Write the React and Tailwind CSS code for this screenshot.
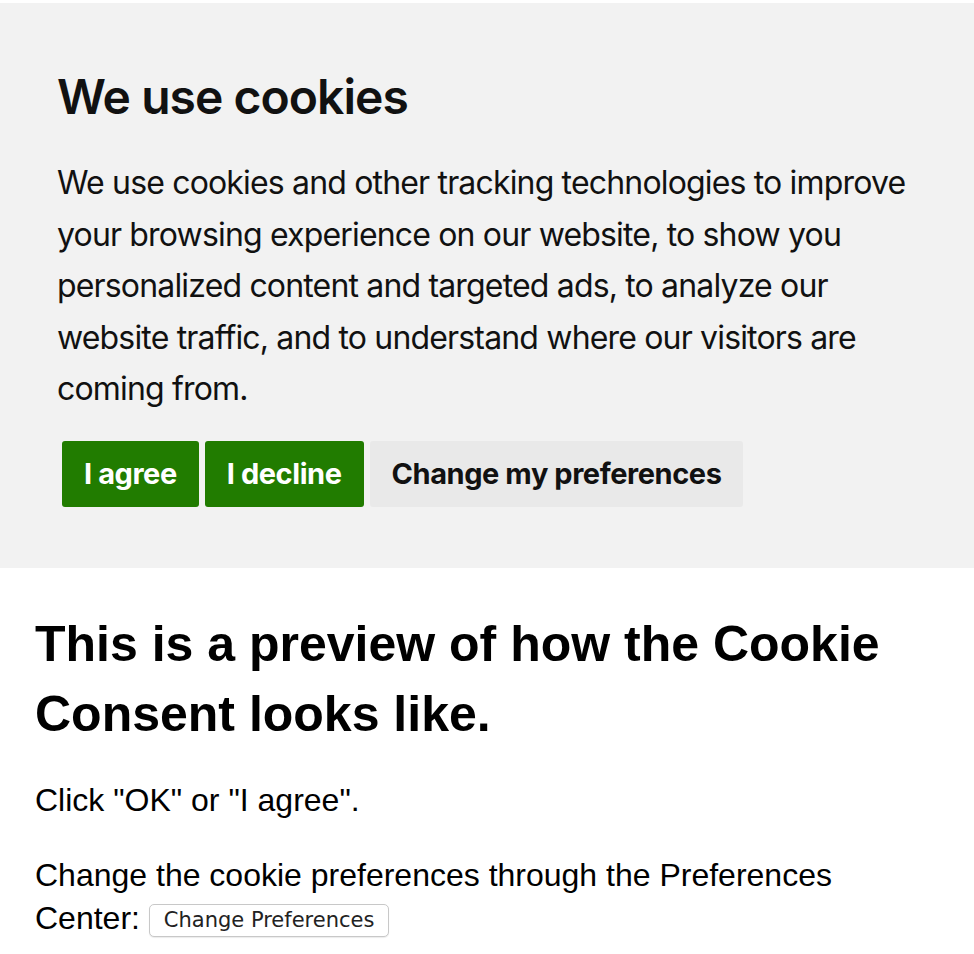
const bannerFont = { fontFamily: 'Inter, "Noto Sans", sans-serif' };

function ConsentBanner() {
  return (
    <section className="mt-[3px] bg-[#f2f2f2] px-[57px] pt-[64px] pb-[61px] text-[#111]" style={bannerFont}>
      <h2 className="text-[48px] leading-[60px] font-semibold tracking-[-0.02em]">We use cookies</h2>
      <p className="mt-[30px] max-w-[870px] text-[32px] leading-[51.5px] tracking-[-0.026em]">
        We use cookies and other tracking technologies to improve your browsing experience on our
        website, to show you personalized content and targeted ads, to analyze our website traffic,
        and to understand where our visitors are coming from.
      </p>
      <div className="mt-[26px] ml-[5px] flex gap-[6px]">
        <button className="h-[66px] rounded-[3px] bg-[#217c00] px-[22px] text-[29px] font-bold tracking-[-0.015em] text-white">
          I agree
        </button>
        <button className="h-[66px] rounded-[3px] bg-[#217c00] px-[22px] text-[29px] font-bold tracking-[-0.015em] text-white">
          I decline
        </button>
        <button className="h-[66px] rounded-[3px] bg-[#e9e9e9] px-[22px] text-[29px] font-bold tracking-[-0.015em] text-[#111]">
          Change my preferences
        </button>
      </div>
    </section>
  );
}

export default function App() {
  return (
    <div className="min-h-screen bg-white">
      <ConsentBanner />
      <main className="px-[35px] pt-[41px] text-black" style={{ fontFamily: '"Liberation Sans", Arial, sans-serif' }}>
        <h1 className="text-[50px] leading-[70px] font-bold">
          This is a preview of how the Cookie Consent looks like.
        </h1>
        <p className="mt-[30px] text-[32px] leading-[43px]">Click "OK" or "I agree".</p>
        <p className="mt-[32px] max-w-[820px] text-[32px] leading-[43px]">
          Change the cookie preferences through the Preferences Center:{' '}
          <button
            className="inline-block h-[33px] rounded-[5px] border border-[#c8c8c8] bg-white px-[14px] align-[2px] text-[21px] leading-[31px] text-[#222] shadow-[0_1px_1px_rgba(0,0,0,0.08)]"
            style={{ fontFamily: '"DejaVu Sans", "Noto Sans", sans-serif' }}
          >
            Change Preferences
          </button>
        </p>
      </main>
    </div>
  );
}
